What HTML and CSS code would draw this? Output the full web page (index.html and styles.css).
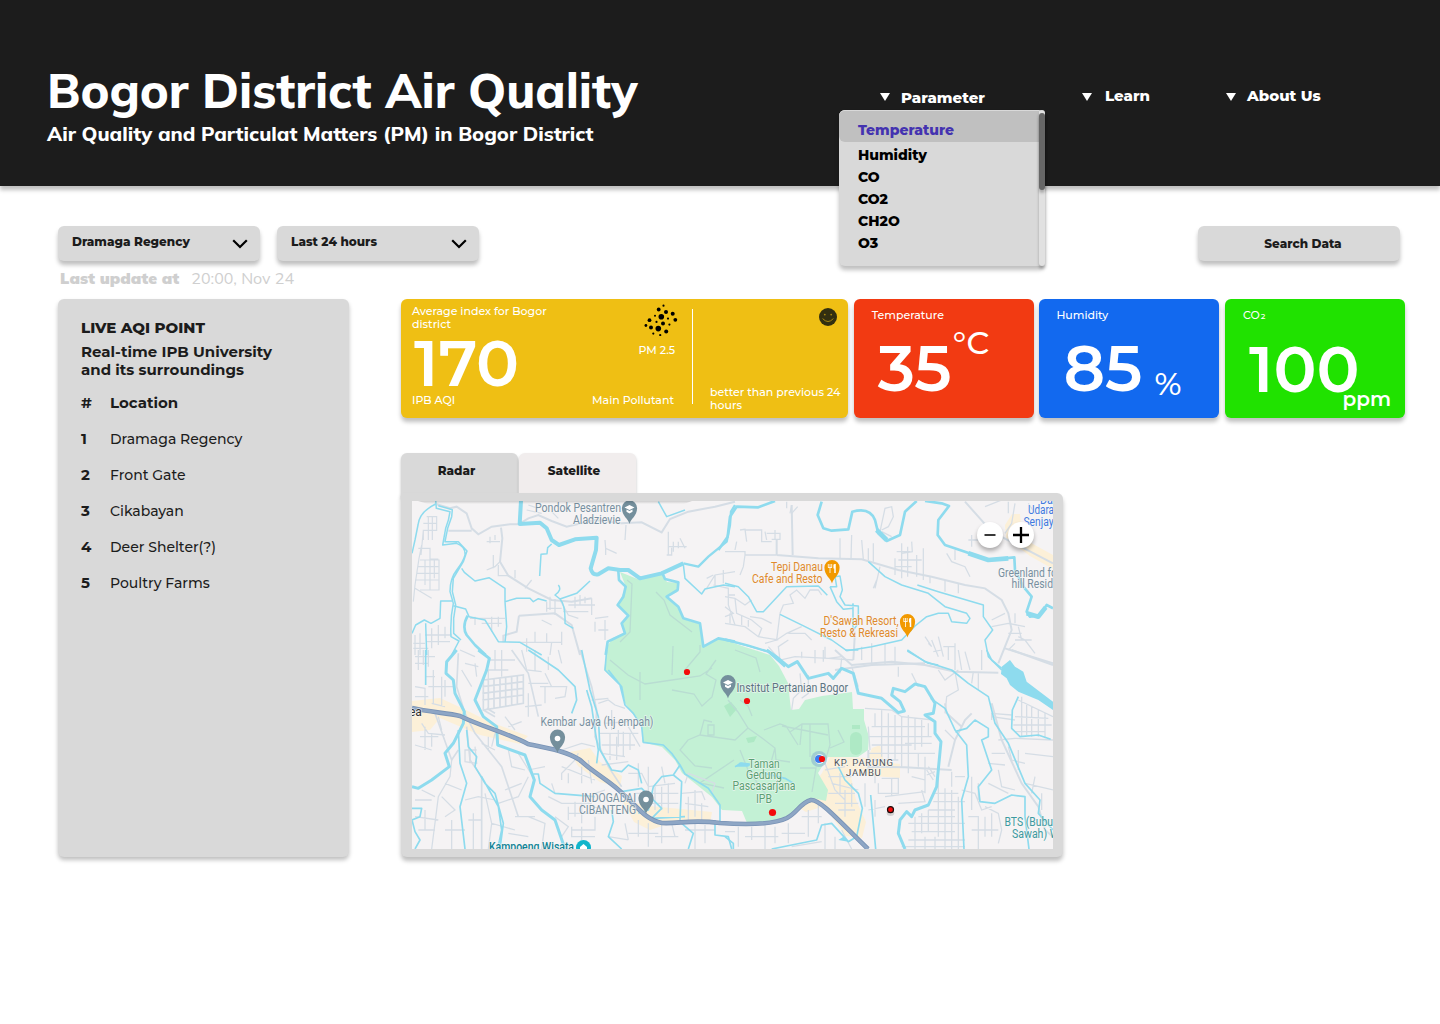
FILE: index.html
```html
<!DOCTYPE html>
<html lang="en">
<head>
<meta charset="utf-8">
<title>Bogor District Air Quality</title>
<link rel="stylesheet" href="styles.css">
</head>
<body>
<header class="header">
  <div class="brand">
    <h1 class="title">Bogor District Air Quality</h1>
    <p class="subtitle">Air Quality and Particulat Matters (PM) in Bogor District</p>
  </div>
  <nav class="nav">
    <div class="nav-item nav-parameter">
      <i class="caret"></i><span>Parameter</span>
      <div class="dropdown">
        <ul class="dropdown-list">
          <li class="option active">Temperature</li>
          <li class="option">Humidity</li>
          <li class="option">CO</li>
          <li class="option">CO2</li>
          <li class="option">CH2O</li>
          <li class="option">O3</li>
        </ul>
        <div class="track"><div class="thumb"></div></div>
      </div>
    </div>
    <div class="nav-item nav-learn"><i class="caret"></i><span>Learn</span></div>
    <div class="nav-item nav-about"><i class="caret"></i><span>About Us</span></div>
  </nav>
</header>

<main class="main">
  <div class="filters">
    <button class="select">Dramaga Regency<svg class="chevron" width="16" height="10" viewBox="0 0 16 10"><path d="M1.2 1.2 8 8 14.8 1.2" fill="none" stroke="#000" stroke-width="2.2"/></svg></button>
    <button class="select">Last 24 hours<svg class="chevron" width="16" height="10" viewBox="0 0 16 10"><path d="M1.2 1.2 8 8 14.8 1.2" fill="none" stroke="#000" stroke-width="2.2"/></svg></button>
    <button class="search">Search Data</button>
  </div>
  <p class="updated"><b>Last update at</b><span>20:00, Nov 24</span></p>

  <div class="content">
    <aside class="panel">
      <h2 class="panel-title">LIVE AQI POINT</h2>
      <p class="panel-text">Real-time IPB University<br>and its surroundings</p>
      <div class="rows">
        <b>#</b><b>Location</b>
        <b>1</b><span>Dramaga Regency</span>
        <b>2</b><span>Front Gate</span>
        <b>3</b><span>Cikabayan</span>
        <b>4</b><span>Deer Shelter(?)</span>
        <b>5</b><span>Poultry Farms</span>
      </div>
    </aside>

    <div class="board">
      <section class="cards">
        <article class="card card-aqi">
          <div class="aqi-left">
            <p>Average index for Bogor<br>district</p>
            <strong class="value">170</strong>
            <p class="foot">IPB AQI</p>
          </div>
          <div class="aqi-mid">
            <svg class="particles" width="34" height="32" viewBox="644 304 34 32">
              <circle cx="663.5" cy="305.7" r="1.1"/><circle cx="658.7" cy="309.5" r="1.9"/><circle cx="666" cy="312" r="2"/><circle cx="672.7" cy="313.7" r="2"/><circle cx="661.3" cy="316.8" r="2.8"/><circle cx="655" cy="315.7" r="1"/><circle cx="649.5" cy="320.2" r="1.9"/><circle cx="668" cy="318.6" r="1.1"/><circle cx="675.3" cy="319.8" r="1.9"/><circle cx="656.5" cy="321.9" r="1.1"/><circle cx="663" cy="323.6" r="2"/><circle cx="669.4" cy="324.6" r="1.1"/><circle cx="645.9" cy="325.5" r="1.4"/><circle cx="651" cy="327.4" r="2"/><circle cx="658.3" cy="328.6" r="2.8"/><circle cx="666.2" cy="331.5" r="2"/><circle cx="653.3" cy="333.6" r="1.1"/><circle cx="660.2" cy="335" r="1.1"/>
            </svg>
            <p class="pm">PM 2.5</p>
            <p class="foot">Main Pollutant</p>
          </div>
          <div class="aqi-right">
            <svg class="smile" width="18" height="18" viewBox="0 0 18 18"><circle cx="9" cy="9" r="9" fill="#322f10"/><circle cx="5.8" cy="6.6" r=".9" fill="#a8870f"/><circle cx="12.2" cy="6.6" r=".9" fill="#a8870f"/><path d="M3.6 10.6Q9 16.4 14.4 10.6" fill="none" stroke="#a8870f" stroke-width="1"/></svg>
            <p>better than previous 24<br>hours</p>
          </div>
        </article>
        <article class="card metric card-temp"><p>Temperature</p><div class="reading"><strong class="value">35</strong><span class="unit unit-c">°C</span></div></article>
        <article class="card metric card-hum"><p>Humidity</p><div class="reading"><strong class="value">85</strong><span class="unit unit-pct">%</span></div></article>
        <article class="card metric card-co2"><p>CO<span class="sub">2</span></p><div class="reading"><strong class="value">100</strong><span class="unit unit-ppm">ppm</span></div></article>
      </section>

      <div class="tabs"><button class="tab selected">Radar</button><button class="tab">Satellite</button></div>
      <section class="frame">
        <svg class="map" width="641" height="348" viewBox="412 501 641 348">
          <defs>
            <linearGradient id="fade" x1="0" y1="0" x2="0" y2="1"><stop offset="0" stop-color="#000" stop-opacity=".16"/><stop offset="1" stop-color="#000" stop-opacity="0"/></linearGradient>
            <g id="pin"><path d="M0 13C-1 8-7.600 5-7.600-3a7.600 7.600 0 0 1 15.200 0C7.600 5 1 8 0 13Z"/></g>
          </defs>
          <rect x="412" y="501" width="641" height="348" fill="#f5f3f4"/>

          <!-- built-up areas -->
          <g fill="#fcf0d8">
            <path d="M412 701 440 698 466 710 490 722 528 736 520 744 480 735 440 718 430 730 412 732Z"/>
            <path d="M570 752 590 748 600 762 622 776 620 788 600 782 578 766Z"/>
            <path d="M622 800 650 806 712 812 710 824 680 820 650 830 634 822Z"/>
            <path d="M798 807 822 773 830 757 868 758 872 748 880 745 884 762 900 764 900 778 872 776 850 772 856 800 866 822 862 838 846 836 824 806 806 812Z"/>
            <path d="M1005 525 1012 514 1020 514 1022 538 1053 555 1053 569 1030 556 1006 538Z"/>
          </g>

          <!-- campus forest -->
          <path fill="#c3f1d5" d="M620 572 640 580 662 574 667 582 679 583 677 592 666 597 678 607 683 619 700 624 704 647 718 639 725 640 745 647 770 655 779 666 788 683 791 710 799 709 805 700 822 696 852 692 853 709 864 709 864 720 869 737 868 750 858 757 828 757 818 773 828 790 826 801 813 798 798 807 782 822 747 823 742 811 722 810 712 797 682 773 675 760 662 747 642 742 642 727 625 703 622 687 604 670 608 645 613 638 625 632 622 623 628 616 618 605 626 587Z"/>
          <g fill="#aee9c5"><rect x="850" y="732" width="12" height="23" rx="6"/><rect x="852" y="725" width="8" height="4"/><path d="M724 706 731 702 737 709 730 717Z"/><path d="M746 738 757 736 754 742 748 743Z"/></g>
          <g fill="none" stroke="#b9ddd2" stroke-width="1.300">
            <path d="M627 580 632 584 630 632 620 642M656 592 664 600 670 615 692 632M610 660 628 675 645 684 672 680 700 676 712 668M672 675 673 646M684 671 700 652 700 645M672 690 694 694 702 706 712 697 716 680 706 674 716 660M640 700 640 672M735 650 756 658 760 672M728 700 738 712 748 728 762 738 775 748 776 760 790 762M748 728 735 740 700 735 688 740 680 750 695 766 712 768M700 735 704 720 712 722M708 725h6v10h-6zM740 700 748 706 752 716M764 730 780 724 786 726 798 745M775 748 770 766 776 770M790 732 802 724 828 724 830 745 826 758M802 724 800 745M810 724 810 757M838 730 844 742 830 748M782 726 828 735M800 768 816 768 812 792M734 760 700 783 724 788M740 750 748 770 770 800"/>
          </g>

          <!-- local roads, north -->
          <g fill="none" stroke="#d5dde5" stroke-width="3.800" transform="translate(395 445) scale(.33333)">
            <path d="M125 178 165 190 185 185 215 205 230 250 250 268 290 245 345 238 372 238M375 235 400 220 430 210 470 228 515 245 600 225 680 235 740 232 800 262 825 222 880 200 960 185 1020 170M160 257 230 257M318 248 322 280 315 350 340 392 400 430 470 465 530 470 590 460" stroke-width="6"/>
            <path d="M372 512 480 505M372 512 365 560 325 572 325 592M480 505 530 540 555 630" stroke-width="6"/>
            <path d="M95 215H125V256H85V285M100 215V285M112 215V285M85 235H125M80 300 72 340 60 420M70 310H105V342H130M75 345H132V435H75M90 345V420M105 345V435M118 345V400M70 365H130M65 385H130M60 405H130M60 420 55 470M85 256 78 330M60 430 110 460" stroke-width="3.500"/>
            <path d="M275 290H315M285 275V295M300 270V285M315 350 300 365 275 375M295 330V370M340 392H310V360M455 470V500M465 455V495M480 462V510M455 490H500M495 465 520 510 550 520M540 455V490M555 450V480M570 455V475M520 480H600M505 500H580M590 460V510M600 520 640 515M630 525V585M600 530V560M610 555H640M440 525 470 540M390 430 410 405M360 400V375"/>
            <path d="M630 285 632 310 665 325M632 310V330M690 285 693 240M820 260V330M835 290V320M850 290V310M820 305H875M815 330H830V308M855 280 870 310M470 200 490 220M395 195 440 205M400 180 430 190"/>
            <path d="M935 430 960 390 1020 380M960 390V420M985 375V415M955 420 1000 430 1000 480 1020 540M935 400 955 390M1000 450H1020M55 595H90M60 570V630M75 565V630M90 570H170M110 550V610M130 540V600M95 590H165M150 545V580M55 610H100M225 520H330M240 515V540M290 515V560M310 515V545M260 535H320M375 592H500M420 560V592M455 565V592M500 560V600M395 580V620M470 592 465 630"/>
          </g>
          <g fill="none" stroke="#d5dde5" stroke-width="3.800" transform="translate(725 480) scale(.33333)">
            <path d="M155 225 280 235 410 238 520 270 620 290 720 315 780 325 830 360 850 400 860 450 840 500 820 550M200 75 203 225M155 225V180M330 570 440 555 600 550M840 505 920 530 984 550M385 540 390 455M720 65 760 110 800 155 984 250" stroke-width="6"/>
            <path d="M45 150 60 148 65 185M60 150H110V185H140M120 155 125 180M125 160H165V178H140M150 150V178M0 215H60V225H155M30 210 35 185M60 225 55 260 45 285M200 75 195 100M218 80 200 100M185 65V85M465 155 480 85 500 80 505 110 490 140 470 150M470 155 500 170M345 175V235M380 165 378 238M410 180 415 238M430 205V240M445 190V245M455 300 445 325M465 260 450 325M510 235V285M530 190V295M548 200V290M560 185 562 215 530 220M515 215H555M520 240H590M575 225V290M595 205V300M510 260H560M615 290V310M660 300V335M700 310V340M665 220 680 245 720 260 735 290M690 210V240"/>
            <path d="M165 400 175 375 205 370 195 345 215 330 240 355 255 330 280 330 290 345M165 400 155 480 185 460 230 440M155 480 120 490M0 350 30 355 60 375 80 360M0 380 25 400 0 410M30 355 35 400 80 420 110 445 100 470M0 430 60 440 100 470 160 480M15 400V430M50 405V435M70 420V440M75 410 110 415 140 430M130 500 165 540 210 530 310 535 385 540M165 540 160 500 190 480M230 515V535M300 500V535M310 535 350 530M410 500V540M440 490V555M480 490V555M510 500V552M190 460 240 460 260 480M600 470 620 500 610 490M620 480 640 530M640 470 655 530M625 515 650 510M655 500H690M670 500V540M690 490V570M720 515 735 570M730 180H770M740 165V200M800 440 850 430 900 440M870 400V430M880 440 890 480M870 480H920M840 400 800 420M850 460H890M870 70 860 130 840 160M780 80 830 60M850 65V100M910 70 930 100M930 520 900 480 880 470M850 510 870 490"/>
          </g>
          <!-- local roads, south -->
          <g fill="none" stroke="#d5dde5" stroke-width="3.800" transform="translate(395 650) scale(.33333)">
            <path d="M190 10 185 110 210 190 240 250 320 350 370 500M350 0 400 70 430 200M555 0 590 110 605 180 600 260 640 350 680 410M215 230 225 330 260 380 260 597M120 190 170 330 190 300M265 90 385 75 385 160 265 180ZM280 90V178M297 85V176M315 83V172M332 80V170M350 78V165M367 78V163M262 110 385 95M262 130 385 115M262 150 385 135M265 180 300 200M275 175 300 190" stroke-width="5"/>
            <path d="M60 20H120M60 40H100M70 0V60M85 0V45M100 0V50M115 60V160M100 110H180M90 80 120 80M140 80V170M60 110 90 115V165M60 140H100M110 160 150 170M80 220 100 250 150 255M90 230V300M75 260H130M60 285 110 300M110 250V290M130 200 140 240M150 90V140M300 0V60M320 0V80M280 30H360M270 60H340M380 0 395 60 440 65M420 0V65M450 70 470 110M400 100H460M460 20V60M490 0 500 40M435 110 515 110 510 140 480 145M390 170 440 165M400 130V200M450 110V160M330 200 360 240M340 230 380 215M280 60V90M240 40 245 80M610 160 640 150 660 165M650 180V240M660 165 690 175M630 220 700 215M670 240V290M615 250H730M645 250V330M665 260V330M685 245V320M620 285H720M705 250V300M620 310 690 320M700 230 735 290M620 345 700 335M590 150 640 145"/>
            <path d="M240 290 245 340 210 335V300H245M225 300V340M260 280 300 300M280 260V300M300 250 290 290M170 330 165 380 130 440 110 597M150 400 200 420M60 450H110M80 420 120 440M60 500 130 510M90 480V540M70 540H120M140 440 180 480 150 500M150 540H210M170 510V597M210 450 250 440 300 450M220 510H260M235 490V597M270 430 290 520 360 540M290 520 280 597M310 460 370 440 400 380M330 420 380 400M340 300 350 350 390 360M370 310 420 390M400 360 450 350M400 500 450 520 440 597M340 550 400 560M360 500 420 500M460 440 500 460 590 460M470 400 480 430M500 390V370L540 330 550 310M500 350 600 390M520 370V400M560 350V400M580 330 590 400M500 300 560 280 600 290M520 470V510M540 455V500M560 460V520M520 490H620M530 540H600V500M530 530V560H600M560 530V570M600 430 630 420M590 470 640 480"/>
            <path d="M700 370 740 370 760 410 840 400M730 340V410M760 350V440M800 350 810 400M720 430H850M780 410V480M800 410V480M820 400V490M770 460H850M870 400 880 370 960 400 950 430M860 430 920 425 930 450M880 440V510M900 420V500M870 460 940 470M920 460V510M690 520 700 570M730 510V560M760 520V590M700 550H790M800 525V580M830 520 840 560M780 560H850M900 520V597M930 525V580M870 540H960M640 560 700 570M480 500 520 530 500 560M210 40 250 50M200 60 230 110M195 0 240 20"/>
          </g>
          <g fill="none" stroke="#d5dde5" stroke-width="3.800" transform="translate(725 650) scale(.33333)">
            <path d="M330 0 380 45 500 35 600 45 690 65 820 68M800 160 830 270 890 400 940 470 960 540 984 560M860 0 984 45M660 160 665 190 710 230M430 300 430 360M670 350 690 270 720 210 740 190M430 350 540 352 680 360" stroke-width="6"/>
            <path d="M270 0V40M295 0V35M350 25 345 70M380 50 400 110M225 70 230 120 205 145 200 180M250 75V130L230 145M420 175 500 180 530 200 625 210M450 190V230M470 180V320M490 190V340M510 195V330M530 200V350M550 195V330M570 205V300M590 210V290M610 220V260M440 230H600M430 260H620M440 285H560M430 310H630M445 330H520M540 280H620M550 320V370M580 310V350M600 320V400M430 230 435 300M450 365V400M470 385H520V430H460V400M500 385V440M480 440 600 425M560 380 600 390V430M520 460 600 455 590 420M450 450V500M430 480 480 470M610 350 630 380M605 360 625 390M605 375 630 365"/>
            <path d="M630 430H700M625 455H720M610 480H690M580 500H690M550 520H720M560 545H690M550 570H720M530 590H720M640 420V560M660 415V597M680 420V597M590 490V550M610 480V545M570 500V597M600 560V597M630 560V597M700 440V597M710 420 750 430 770 480 800 470M740 380V480M760 400V450M730 500H760V597M780 470 820 490 830 540 820 580M740 540H820M780 500V560M800 490V560M640 370V420M680 365V410M690 380 720 380M660 240 690 270M560 70 580 110M520 50V80M640 60 660 90 700 60M690 65 700 120 665 140 660 190M740 100 745 65M770 0V60M700 0 710 60M760 70V120"/>
            <path d="M870 200 970 205M865 225H980M880 150 984 200M890 140V260M905 165V255M920 170V260M940 180V260M960 190V265M870 245H960M800 200 870 210M820 270 870 265 984 270M850 290 860 330 900 340M880 300V360M900 310 984 320M800 310H840M790 340 840 345M820 360 830 410 870 420M790 400 850 430M900 400 984 420M930 380 920 430M950 430V480M800 210V190L860 195M300 340 330 420 360 450M310 380H380M320 400 400 420M345 370V430M300 360 360 350M310 430H390M330 460H400M360 420V500M380 400V470M340 480H390M420 400 420 470M0 545H30M40 530V590M80 530V570M120 525V597M150 530V580M60 560H160M190 520V580M170 550H240M250 480V560M230 500H290M280 460V520M200 590 290 575M300 520V597M330 560V597M350 540 380 597"/>
          </g>

          <!-- rivers -->
          <g fill="none" stroke="#8edbee" stroke-width="4.500" stroke-linejoin="round" transform="translate(395 445) scale(.33333)">
            <path d="M122 177C95 190 72 210 69 240L60 285 51 325M470 297 458 308 456 326 438 328 434 393M200 370 208 382 240 408 282 398 330 430 330 470 365 460 405 460 415 470 430 461 455 468M330 470 335 545 330 592M490 420Q502 435 480 450L495 462 545 445 585 408M495 462Q512 480 510 535L535 550M51 565 62 540 88 525 108 535 135 520 137 468 172 468M92 535 95 630M175 482 212 492 222 515 270 525 310 590 375 592 440 630M865 358 870 400 920 447 930 432 985 420 1020 425M790 170 815 215 870 195"/>
            <path d="M122 165 124 190 165 200Q162 225 152 250L143 300 185 295Q212 305 210 330 205 350 185 375 165 400 165 440L175 475Q165 520 168 575L192 588 170 630M130 182 172 194 170 215 158 250 150 290 190 290 216 318 205 350 175 400 172 440 182 480 176 520 176 565 198 585"/>
            <path stroke-width="8" d="M218 512Q200 545 215 570L240 600 272 630M800 380 810 402 850 412 848 435 815 455 850 485 865 520 915 535 925 605 970 580 1020 590M670 378 672 405 692 425 685 455 668 480 700 512 680 535 690 565 655 582 638 590 632 630"/>
            <path stroke-width="12" d="M378 168 374 237 435 233 455 250 470 285 492 300 540 283 605 278 603 315 587 370Q592 392 610 388L640 370 675 375 700 375 735 400 800 385 865 355"/>
            <path stroke-width="7" d="M865 355 910 365 940 335 995 290 1005 240 1008 200 1020 180"/>
          </g>
          <g fill="none" stroke="#8edbee" stroke-width="4.500" stroke-linejoin="round" transform="translate(725 480) scale(.33333)">
            <path stroke-width="8" d="M-20 210 8 170 15 110 35 80 100 82 150 63M290 65 278 105 295 145 320 152 370 148 382 95Q435 80 450 120L460 160 485 183 525 165 540 95 575 63M600 63 650 70 672 78 640 120 638 165 660 195 720 215 790 240 868 232 870 270M870 270 895 320 920 350 905 395 915 410 945 405 965 375 984 385"/>
            <path stroke-width="14" d="M455 150 485 180M730 220 790 240 850 235M905 400 940 410 962 382"/>
            <path d="M430 245 480 290 530 315 610 340 660 380 725 400 735 415 725 430 680 425 670 400 640 400 605 410 570 438 530 480 440 500 365 512 320 480 240 440 165 403M577 315 640 335 775 375 775 410 803 450 780 480 790 530 830 570M0 310 40 320 70 350 95 395 115 395 185 320 280 318 307 346M315 320 335 320 330 290 345 288 352 330 345 350 360 375 400 378 400 430 385 450M384 455 384 370M315 320 335 365 355 388 385 385M0 480 60 495 130 515 180 558M547 513 610 550 640 555"/>
            <path stroke-width="7" d="M0 478 70 497 130 515 180 560"/>
          </g>
          <g fill="none" stroke="#8edbee" stroke-width="5" stroke-linejoin="round" transform="translate(395 650) scale(.33333)">
            <path stroke-width="9" d="M185 0 155 35 153 70 175 90 180 130 208 185 205 220 175 280 150 310 163 350 110 390 70 415 51 410M250 0 283 25 275 60 240 150 265 200 305 230 308 285 390 315 418 390 405 440 440 480 480 510 510 597"/>
            <path d="M92 0 92 105M400 0 490 60 540 110 545 150 530 190M190 240 195 340 215 400 195 470 210 597M215 240 220 290 245 320 240 350 270 400 300 430 325 520 315 597M260 380 310 470 320 540 308 597M415 372 430 372 435 400 480 430 600 440M51 475 80 475 75 500 51 510 60 545 75 570 60 597M680 425 740 415 800 475 770 505 870 500M650 480 655 515 640 560 680 597M605 340 610 300 600 240 590 170 575 120M560 0 585 120 610 200 615 300 650 360 680 365 700 345 730 360 740 400M730 490 760 480 775 410 800 380 835 375 860 395 855 510M835 375 855 345 830 310 805 285 745 277 740 230 715 190 690 165 675 105 630 60 635 0M640 60 680 110 690 165M855 345 870 372 940 415 975 465 975 520M960 510 960 555 1000 560 1010 597M860 520 895 550 880 597"/>
          </g>
          <g fill="none" stroke="#8edbee" stroke-width="5" stroke-linejoin="round" transform="translate(725 650) scale(.33333)">
            <path stroke-width="9" d="M125 0 160 25 190 50 217 35 250 85 310 70 325 85 350 55 385 70 400 130 470 145 520 188 538 183 525 155 500 135 505 115 540 125 570 102 600 110 630 160 625 190 600 195 630 215 630 250 648 275 635 410 610 465 570 480 560 500 545 485 525 510 520 550 540 597"/>
            <path d="M617 145 660 175 690 240 725 285 730 380 710 450 717 597M690 245 725 235 750 210 790 235 790 260 770 270 800 360 760 410 765 455 810 460 860 435 900 440 900 500 912 597M547 0 600 35 680 60 730 100 790 140 810 220 850 280 900 400 945 450 940 490 984 540M785 0 800 30 830 55M880 140 862 180 860 235 885 260 940 255 977 268M340 350 360 390 400 430 412 475 395 560 370 575 320 520 290 525 275 570 200 585 140 597M437 435 452 597M30 350 50 340 75 345M120 370 180 385 205 400M360 0 400 0M0 560 25 580 25 597"/>
            <path fill="#8edbee" stroke="none" d="M830 50 855 30 870 50 895 65 905 95 984 155V180L940 150 880 125 855 105 845 85 828 72ZM340 570 355 560 370 575ZM30 350 45 337 75 340 70 350Z"/>
          </g>

          <!-- main highway -->
          <g fill="none" stroke-linejoin="round">
            <path stroke="#7892b5" stroke-width="4.600" d="M412 708C428 712 448 713 460 716 480 726 510 734 528 744 548 748 566 751 580 760 592 772 612 782 624 795 636 805 645 820 662 823 680 824 690 819 720 823 750 825 775 824 787 818 798 812 800 803 811 800 820 799 840 822 868 849"/>
            <path stroke="#8ea6c5" stroke-width="3" d="M412 708C428 712 448 713 460 716 480 726 510 734 528 744 548 748 566 751 580 760 592 772 612 782 624 795 636 805 645 820 662 823 680 824 690 819 720 823 750 825 775 824 787 818 798 812 800 803 811 800 820 799 840 822 868 849"/>
          </g>

          <!-- place pins -->
          <g fill="#748f9c"><use href="#pin" x="629.500" y="511"/><use href="#pin" x="728" y="685.500"/><use href="#pin" x="557.500" y="740"/><use href="#pin" x="646" y="801"/></g>
          <g fill="#f29900"><use href="#pin" x="832" y="570.500"/><use href="#pin" x="907.500" y="624.500"/></g>
          <g fill="#fff"><circle cx="557.500" cy="738.500" r="2.800"/><circle cx="646" cy="799.500" r="2.800"/><path d="m624.500 507.500 5-2.500 5 2.500-5 2.500zM626.500 509.500l3 1.500 3-1.500v2.300l-3 1.600-3-1.600zM723 682.500l5-2.500 5 2.500-5 2.500zM725 684.500l3 1.500 3-1.500v2.300l-3 1.600-3-1.600z"/></g>
          <g fill="none" stroke="#fff" stroke-width=".8"><path d="M828.300 564v3.500M830 564v9M831.700 564v3.500M828 567.500h4M903.800 618v3.500M905.500 618v9M907.200 618v3.500M903.500 621.500h4"/><path stroke-width="1.500" d="M835 564v9M834.200 564.500v4M910.500 618v9M909.700 618.500v4"/></g>
          <circle cx="583.500" cy="847.500" r="7.500" fill="#12b5cb"/><path d="m580 847 3.500-3 3.500 3v3h-7z" fill="#fff"/>

          <!-- place names -->
          <g class="labels">
            <g fill="#7890a0">
              <text x="535" y="512" textLength="86" lengthAdjust="spacingAndGlyphs">Pondok Pesantren</text>
              <text x="573" y="523.500" textLength="47.500" lengthAdjust="spacingAndGlyphs">Aladzievie</text>
              <text x="540.500" y="726" textLength="113" lengthAdjust="spacingAndGlyphs">Kembar Jaya (hj empah)</text>
              <text x="581.500" y="802" textLength="54.500" lengthAdjust="spacingAndGlyphs">INDOGADAI</text>
              <text x="579" y="813.500" textLength="57" lengthAdjust="spacingAndGlyphs">CIBANTENG</text>
              <text x="998" y="576.500" textLength="59" lengthAdjust="spacingAndGlyphs">Greenland fo</text>
              <text x="1011.500" y="588" textLength="41.500" lengthAdjust="spacingAndGlyphs">hill Resid</text>
            </g>
            <g fill="#5c7482"><text x="736.500" y="691.500" textLength="111.500" lengthAdjust="spacingAndGlyphs">Institut Pertanian Bogor</text></g>
            <g fill="#e08a2c">
              <text x="771" y="570.500" textLength="52" lengthAdjust="spacingAndGlyphs">Tepi Danau</text>
              <text x="752" y="583" textLength="70.500" lengthAdjust="spacingAndGlyphs">Cafe and Resto</text>
              <text x="823.500" y="625" textLength="75" lengthAdjust="spacingAndGlyphs">D'Sawah Resort,</text>
              <text x="820" y="637" textLength="78" lengthAdjust="spacingAndGlyphs">Resto &amp; Rekreasi</text>
            </g>
            <g fill="#5b9f73">
              <text x="748.500" y="768" textLength="31" lengthAdjust="spacingAndGlyphs">Taman</text>
              <text x="746" y="778.500" textLength="36" lengthAdjust="spacingAndGlyphs">Gedung</text>
              <text x="732.500" y="790" textLength="63" lengthAdjust="spacingAndGlyphs">Pascasarjana</text>
              <text x="756" y="803" textLength="16" lengthAdjust="spacingAndGlyphs">IPB</text>
            </g>
            <g fill="#4c5158">
              <text x="834" y="766" class="district">KP. PARUNG</text>
              <text x="846" y="776" class="district">JAMBU</text>
            </g>
            <g fill="#3f7ae0">
              <text x="1040" y="503.500" textLength="13" lengthAdjust="spacingAndGlyphs">Da</text>
              <text x="1028" y="514" textLength="26" lengthAdjust="spacingAndGlyphs">Udara</text>
              <text x="1023.500" y="525.500" textLength="30" lengthAdjust="spacingAndGlyphs">Senjay</text>
            </g>
            <g fill="#3c9aa0">
              <text x="1004.500" y="826" textLength="48.500" lengthAdjust="spacingAndGlyphs">BTS (Bubu</text>
              <text x="1012" y="838" textLength="47" lengthAdjust="spacingAndGlyphs">Sawah) W</text>
            </g>
            <g fill="#108395"><text x="489" y="850.500" textLength="85" lengthAdjust="spacingAndGlyphs" class="strong">Kampoeng Wisata</text></g>
            <g fill="#333"><text x="409" y="716">ea</text></g>
          </g>

          <!-- sensor points -->
          <circle cx="819" cy="759" r="8" fill="#8ab8cf" opacity=".6"/>
          <circle cx="819.500" cy="759" r="4.800" fill="#fff"/><circle cx="819" cy="759" r="4" fill="#3b7df0"/>
          <g fill="#f30c0c"><circle cx="687" cy="672" r="3.100"/><circle cx="747" cy="701" r="3.100"/><circle cx="822" cy="759" r="3.100"/><circle cx="772.500" cy="812.500" r="3.600"/></g>
          <ellipse cx="890.500" cy="813" rx="3.800" ry="3" fill="#000" opacity=".14"/>
          <circle cx="890.500" cy="809.700" r="3" fill="#f30c0c" stroke="#1a0a0a" stroke-width="1.200"/>
          <path d="M418 501H692L684 504H428Z" fill="url(#fade)"/>
        </svg>
        <div class="zoom">
          <button class="zoom-btn"><svg width="26" height="26"><path d="M7.500 13h11" stroke="#222" stroke-width="1.800"/></svg></button>
          <button class="zoom-btn"><svg width="26" height="26"><path d="M5 13h16M13 5v16" stroke="#000" stroke-width="2.300"/></svg></button>
        </div>
      </section>
    </div>
  </div>
</main>
</body>
</html>
```
FILE: styles.css
```css
* { box-sizing: border-box; }
body { margin: 0; min-height: 1024px; background: #fff; color: #1c1c1c; font-family: "Montserrat", "Inter", sans-serif; }
h1, h2, p, ul { margin: 0; padding: 0; }
button { border: 0; padding: 0; font: inherit; color: inherit; }

.header { display: flex; height: 186px; padding: 60px 0 0 47px; background: #1c1c1c; color: #fff; box-shadow: 0 4px 4px rgba(0, 0, 0, .25); }
.brand { width: 833px; font-family: "Mulish", "Open Sans", sans-serif; white-space: nowrap; }
.title { font-size: 48px; line-height: 60px; font-weight: 800; }
.subtitle { font-size: 20px; line-height: 28px; font-weight: 800; }
.nav { display: flex; align-items: flex-start; font-size: 15px; line-height: 18px; font-weight: 800; white-space: nowrap; padding-top: 27px; }
.nav-item { display: flex; position: relative; }
.nav-parameter { width: 202px; padding-top: 2px; }
.nav-learn { width: 144px; }
.caret { width: 10px; height: 8px; margin: 6px 11px 0 0; background: #fff; clip-path: polygon(0 0, 100% 0, 50% 100%); }
.nav-parameter .caret { margin-top: 4px; }
.nav-learn .caret { margin-right: 13px; }

.dropdown { position: absolute; z-index: 2; left: -41px; top: 23px; width: 206px; height: 156px; display: flex; border-radius: 6px; background: #d9d9d9; box-shadow: 0 4px 4px rgba(0, 0, 0, .25); }
.dropdown-list { width: 200px; list-style: none; color: #000; font-size: 14px; }
.option { height: 22px; line-height: 22px; padding-left: 19px; }
.option.active { height: 32px; line-height: 38px; margin-bottom: 2px; border-radius: 6px 0 0 6px; border-top: 1px solid #d9d9d9; background: #c0c0c0; color: #4433b0; }
.track { width: 6px; padding-top: 3px; border-radius: 4px; background: #e1e1e1; box-shadow: 0 3px 3px rgba(0, 0, 0, .25); }
.thumb { height: 77px; border-radius: 3px; background: #666; box-shadow: 0 3px 3px rgba(0, 0, 0, .25); }

.main { padding: 40px 35px 60px 58px; }
.filters { display: flex; gap: 17px; }
.select, .search { width: 202px; height: 35px; border-radius: 6px; background: #d9d9d9; box-shadow: 0 4px 4px rgba(0, 0, 0, .25); font-size: 12px; line-height: 15px; font-weight: 800; color: #1c1c1c; }
.select { display: flex; justify-content: space-between; padding: 8px 12px 0 14px; text-align: left; }
.chevron { margin-top: 5px; }
.search { margin-left: auto; margin-right: 5px; padding-left: 8px; }
.updated { display: flex; gap: 12px; height: 38px; padding: 7px 0 0 2px; font: 400 16px/20px "Mulish", "Open Sans", sans-serif; color: #cfcfcf; }
.updated b { font-weight: 1000; }

.content { display: flex; gap: 52px; }
.panel { width: 291px; height: 558px; padding: 20px 23px; border-radius: 6px; background: #d9d9d9; box-shadow: 0 3px 4px rgba(0, 0, 0, .25); font-size: 15px; line-height: 18px; }
.panel-title { font-size: 15px; line-height: 18px; font-weight: 800; }
.panel-text { margin-top: 6px; font-weight: 700; }
.rows { display: grid; grid-template-columns: 29px 1fr; grid-auto-rows: 36px; margin-top: 6px; line-height: 36px; }
.rows b { font-weight: 700; }
.rows span { font-size: 14px; font-weight: 500; }

.board { width: 1004px; }
.cards { display: grid; grid-template-columns: 447px 180px 180px 180px; column-gap: 5.700px; }
.card { height: 119px; border-radius: 6px; color: #fff; box-shadow: 0 4px 4px rgba(0, 0, 0, .25); font-size: 11px; line-height: 13px; font-weight: 500; white-space: nowrap; }
.value { display: block; font-size: 64px; line-height: 64px; font-weight: 600; }
.card-aqi { display: flex; padding: 0 0 0 11px; background: #efbf14; }
.aqi-left { width: 165px; padding-top: 6px; }
.aqi-left .value { margin-left: 2px; }
.aqi-left .foot { margin-top: -1px; }
.aqi-mid { display: flex; flex-direction: column; align-items: flex-end; width: 116px; height: 95px; margin-top: 10px; padding-right: 18px; border-right: 1px solid #fff; }
.particles { margin: -5px -4px 0 0; fill: #000; flex: none; }
.pm { margin: 8px -1px 0 0; }
.aqi-mid .foot { margin: 37px 0 0; }
.aqi-right { display: flex; flex-direction: column; width: 155px; padding: 9px 11px 0 17px; }
.smile { align-self: flex-end; margin: 0 0 60px; flex: none; }
.metric { padding: 10px 0 0 18px; }
.card-hum { padding-left: 17px; }
.sub { font-size: 8px; margin-left: 1px; }
.reading { display: flex; align-items: flex-start; padding: 14px 0 0 6px; }
.unit { font-size: 32px; line-height: 32px; }
.card-hum .reading { padding-left: 7px; }
.unit-c { margin: -9px 0 0 1px; }
.unit-pct { margin: 32px 0 0 12px; }
.unit-ppm { margin: 50px 0 0 -17px; font-size: 20px; line-height: 24px; font-weight: 600; }
.card-temp { background: #f23a12; }
.card-hum { background: #1269ef; }
.card-co2 { background: #20e200; }

.tabs { display: flex; gap: 1px; margin-top: 35px; height: 40px; }
.tab { width: 117px; height: 44px; padding-bottom: 9px; border-radius: 6px 6px 0 0; background: #f1eded; box-shadow: 0 2px 3px rgba(0, 0, 0, .25); font-size: 12px; font-weight: 800; }
.tab:last-child { padding-right: 7px; }
.tab.selected { padding-right: 6px; background: #d9d9d9; }
.frame { position: relative; width: 662px; height: 364px; padding: 8px 10px 8px 11px; border-radius: 0 6px 6px 6px; background: #d9d9d9; box-shadow: 0 4px 4px rgba(0, 0, 0, .25); }
.map { display: block; overflow: hidden; }
.labels { font: 12px "Roboto", sans-serif; paint-order: stroke; stroke: #f7f7f7; stroke-width: 1.500px; stroke-opacity: .7; }
.district { font-size: 9.500px; letter-spacing: .75px; }
.strong { font-weight: 500; }
.zoom { position: absolute; top: 29px; right: 29px; display: flex; gap: 5px; }
.zoom-btn { width: 26px; height: 26px; border-radius: 50%; background: #fff; box-shadow: 0 3px 4px rgba(0, 0, 0, .3); }
.zoom-btn svg { display: block; }
```
